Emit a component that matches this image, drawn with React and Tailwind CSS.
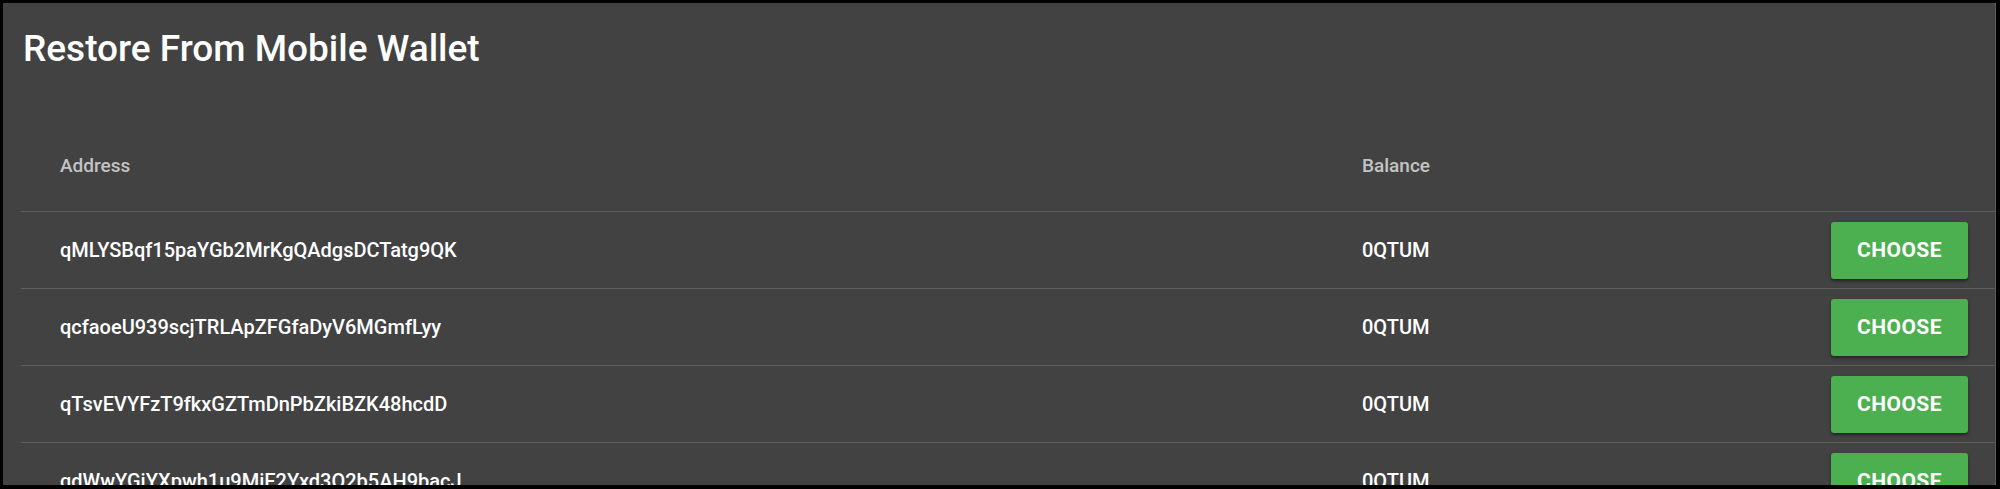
import React from "react";

const rows = [
  "qMLYSBqf15paYGb2MrKgQAdgsDCTatg9QK",
  "qcfaoeU939scjTRLApZFGfaDyV6MGmfLyy",
  "qTsvEVYFzT9fkxGZTmDnPbZkiBZK48hcdD",
  "qdWwYGiYXpwh1u9MiE2Yxd3Q2b5AH9bacJ",
];

export default function App() {
  return (
    <div
      className="w-[2000px] h-[489px] bg-black pt-[3px] pl-[3px] pr-[4px] pb-[4px]"
      style={{ fontFamily: "Roboto, 'Liberation Sans', sans-serif" }}
    >
      <div className="h-full bg-[#424242] overflow-hidden border-r border-[#5a5a5a] flex flex-col">
        <div className="h-[86px] shrink-0 flex items-center pl-[20px] pt-[6px]">
          <h1 className="text-[37px] leading-[44px] text-white font-medium">
            Restore From Mobile Wallet
          </h1>
        </div>
        <div className="ml-[18px] flex flex-col">
          <div className="h-[123px] shrink-0 flex items-end pb-[35px] border-b border-[#5e5e5e] text-[#c4c4c4] text-[19px] leading-[20px] font-medium">
            <div className="w-[1341px] pl-[39px]">Address</div>
            <div>Balance</div>
          </div>
          {rows.map((addr) => (
            <div
              key={addr}
              className="h-[77px] shrink-0 flex items-center border-b border-[#5e5e5e] text-white text-[20px] leading-[20px] font-medium"
            >
              <div className="w-[1341px] pl-[39px]">{addr}</div>
              <div className="flex-1">0QTUM</div>
              <button className="mr-[27px] w-[137px] h-[57px] rounded-[3px] bg-[#4caf50] text-white text-[21px] font-bold tracking-[0.02em] shadow-[0_2px_3px_rgba(0,0,0,0.45)]">
                CHOOSE
              </button>
            </div>
          ))}
        </div>
      </div>
    </div>
  );
}
